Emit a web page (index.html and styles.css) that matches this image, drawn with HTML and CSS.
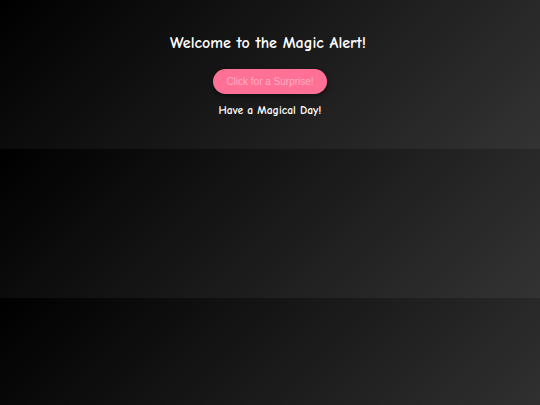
FILE: index.html
```html
<!DOCTYPE html>
<html lang="en">
<head>
<meta charset="utf-8">
<title>Magic Alert</title>
<link rel="stylesheet" href="styles.css">
</head>
<body>
<main class="stage">
  <h1 class="title">Welcome to the Magic Alert!</h1>
  <button class="surprise" type="button">Click for a Surprise!</button>
  <p class="wish">Have a Magical Day!</p>
</main>
</body>
</html>
```

FILE: styles.css
```css
html {
  background: linear-gradient(135deg, #000000, #333333);
}
body {
  margin: 0;
  color: #ffffff;
  font-family: "Comic Sans MS", "Comic Neue", "Chalkboard SE", cursive, sans-serif;
}
.stage {
  display: flex;
  flex-direction: column;
  align-items: center;
  padding: 32px 20px 30px;
  text-align: center;
}
.title {
  margin: 0 0 0 -4px;
  font-size: 16px;
  line-height: 22px;
  font-weight: bold;
}
.surprise {
  margin-top: 15px;
  height: 25px;
  padding: 0 13px;
  border: none;
  border-radius: 13px;
  background: #ff7096;
  color: #ffadc3;
  font-family: "Liberation Sans", Arial, sans-serif;
  font-size: 10px;
  box-shadow: 0 2px 5px rgba(0, 0, 0, 0.45);
}
.wish {
  margin: 8px 0 0;
  font-size: 11.6px;
  line-height: 17px;
  font-weight: bold;
}
```
